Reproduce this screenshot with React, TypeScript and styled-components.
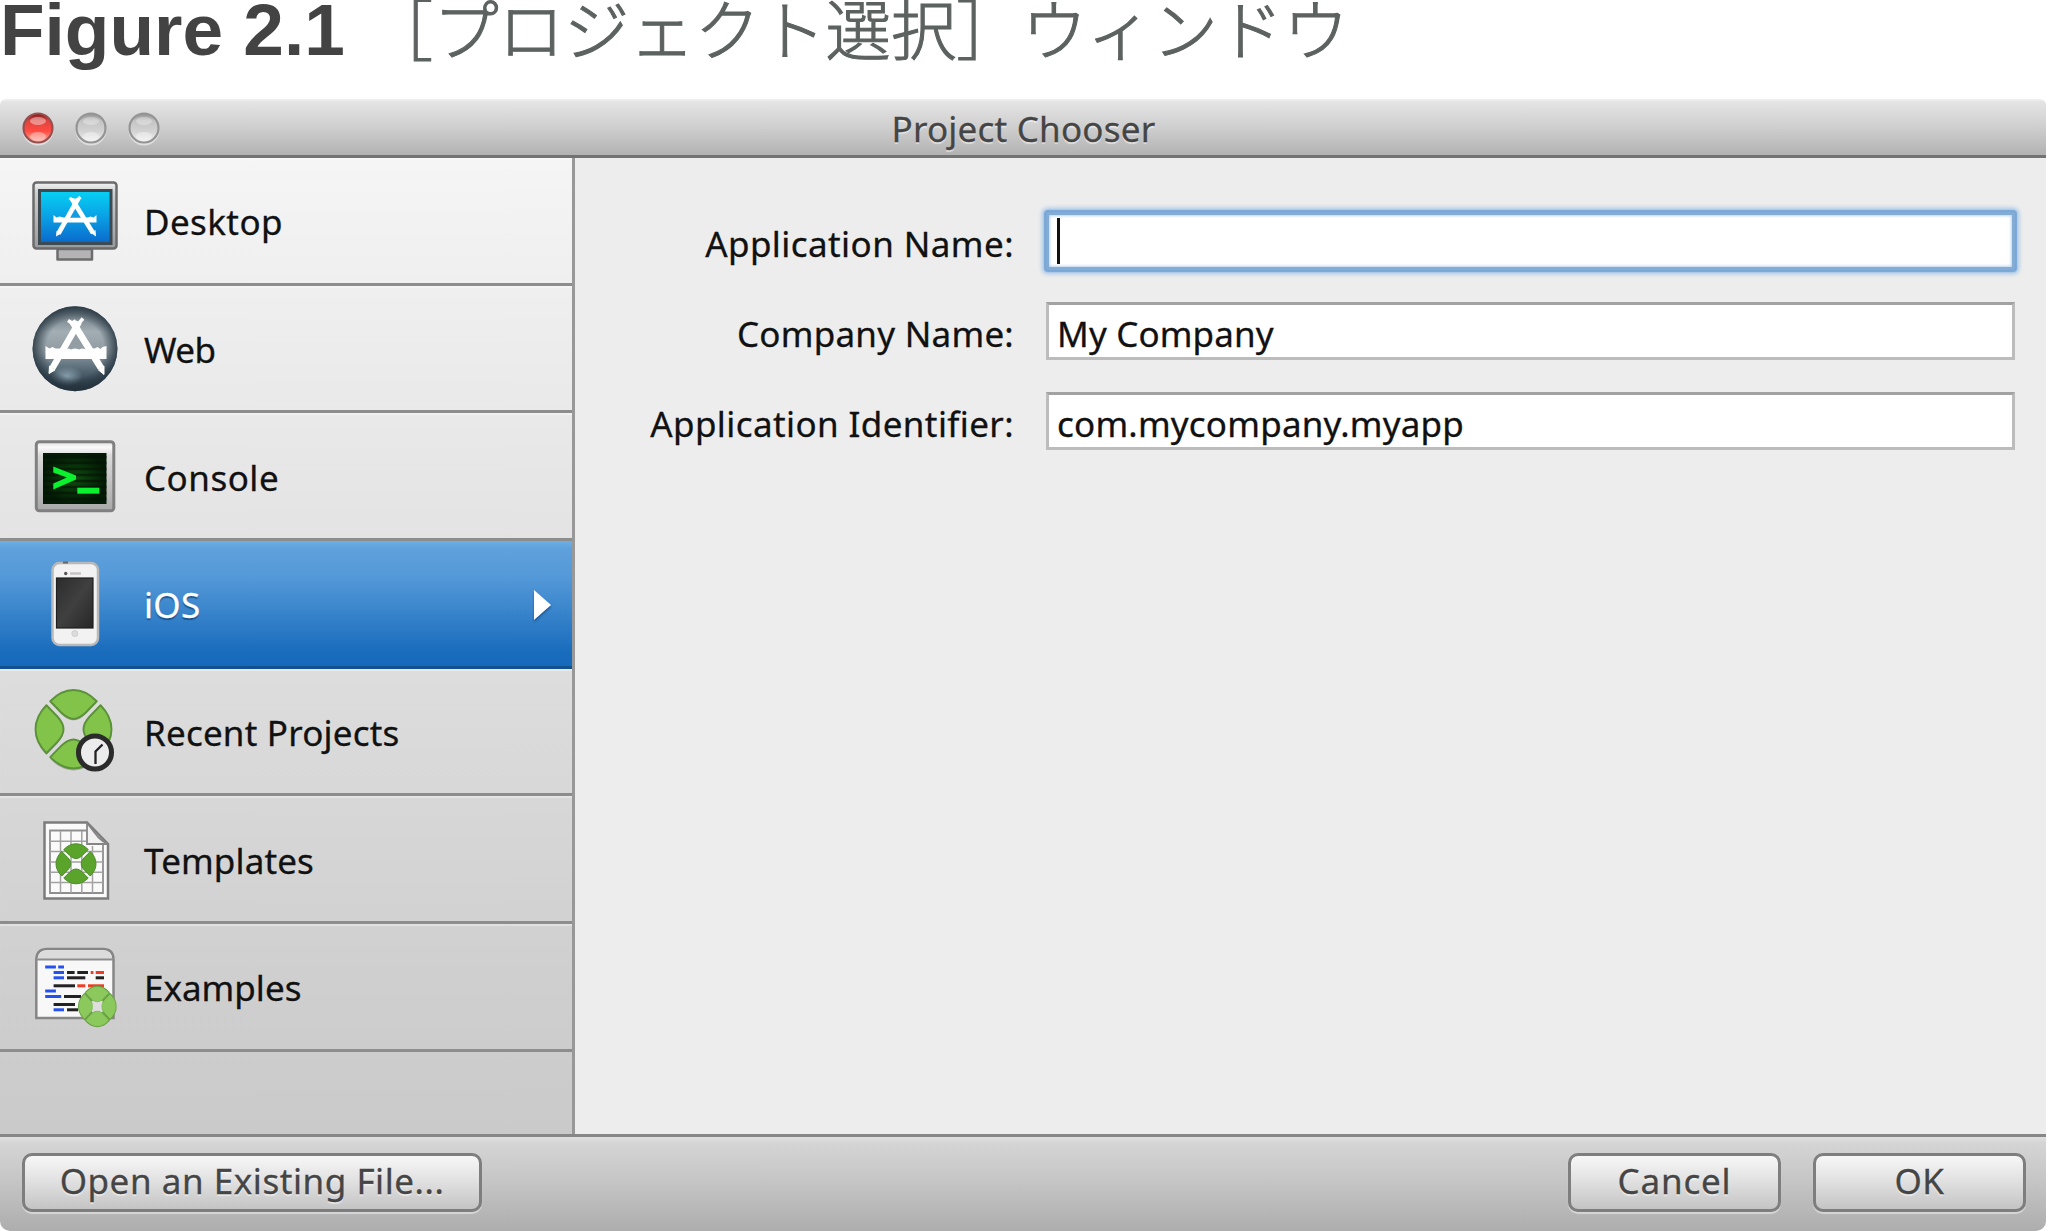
import React from 'react';
import styled, { createGlobalStyle, css } from 'styled-components';

const GlobalStyle = createGlobalStyle`
  *, *::before, *::after { box-sizing: border-box; }
  body { margin: 0; background: #fff; overflow: hidden; }
`;

const Page = styled.div`
  display: flex;
  flex-direction: column;
  width: 2048px;
  height: 1231px;
  overflow: hidden;
  font-family: 'Noto Sans', 'Open Sans', sans-serif;
  font-size: 35px;
  line-height: 48px;
  color: #111;
`;

const Caption = styled.h1`
  flex: none;
  height: 99px;
  margin: 0;
  font: bold 73px/60px 'Liberation Sans', sans-serif;
  color: #434343;
  white-space: nowrap;
`;

const CaptionText = styled.span`
  margin-left: 23px;
  font: 300 65.4px/0 'Noto Sans CJK JP', sans-serif;
  color: #5c6260;
  -webkit-text-stroke: 1.1px #5c6260;
`;

const Window = styled.section`
  flex: 1;
  display: flex;
  flex-direction: column;
  min-height: 0;
  margin-right: 2px;
  border-radius: 6px 6px 10px 10px;
  overflow: hidden;
  -webkit-text-stroke: 0.3px currentColor;
`;

const TitleBar = styled.header`
  flex: none;
  display: grid;
  grid-template-columns: 1fr auto 1fr;
  align-items: center;
  height: 59px;
  padding: 2px 21px 0 22px;
  border-bottom: 3px solid #737373;
  background: linear-gradient(#f2f2f2, #e4e4e4 5%, #cfcfcf 50%, #b2b2b2);
`;

const Lights = styled.div`
  display: flex;
  gap: 21px;
`;

const Title = styled.div<{ $track: number }>`
  padding-top: 2px;
  letter-spacing: ${p => p.$track}px;
  color: #454545;
  text-shadow: 0 2px 1px rgba(255, 255, 255, 0.5);
`;

const Body = styled.div`
  flex: 1;
  display: flex;
  min-height: 0;
`;

const Sidebar = styled.nav`
  flex: none;
  width: 575px;
  border-right: 3px solid #989898;
  background: linear-gradient(#f5f5f5, #e6e6e6 33%, #dcdcdc 55%, #cfcfcf 84%, #cacaca);
`;

const Row = styled.div<{ $selected?: boolean }>`
  display: flex;
  align-items: center;
  height: 127.7px;
  padding: 0 21px 0 26px;
  border-bottom: 3px solid #8d8d8d;
  box-shadow: inset 0 2px 1px rgba(255, 255, 255, 0.35);
  ${p => p.$selected && css`
    color: #fff;
    text-shadow: 0 2px 1px rgba(0, 40, 90, 0.55);
    border-bottom-color: #12518f;
    background: linear-gradient(#6cb0e6, #5fa1dc 6%, #5398d8 30%, #1a6dbd 88%, #176abb);
    box-shadow: none;
  `}
`;

const Icon = styled.svg`
  flex: none;
  width: 96px;
  height: 96px;
  overflow: visible;
`;

const RowLabel = styled.span<{ $track: number }>`
  flex: 1;
  margin-left: 22px;
  padding-top: 4px;
  letter-spacing: ${p => p.$track}px;
`;

const Arrow = styled.svg`
  width: 17px;
  height: 30px;
  margin-top: 3px;
  overflow: visible;
  filter: drop-shadow(0 2px 1px rgba(0, 40, 90, 0.5));
`;

const Form = styled.main`
  flex: 1;
  display: flex;
  flex-direction: column;
  gap: 32px;
  padding: 54px 31px 0 0;
  background: #ededed;
`;

const Field = styled.label`
  display: flex;
  align-items: center;
  gap: 32px;
  height: 58px;
`;

const FieldLabel = styled.span<{ $track: number }>`
  width: 439px;
  padding-top: 6px;
  text-align: right;
  white-space: nowrap;
  letter-spacing: ${p => p.$track}px;
`;

const Input = styled.div<{ $focused?: boolean; $track?: number }>`
  flex: 1;
  display: flex;
  align-items: center;
  height: 58px;
  padding: 6px 0 0 8px;
  border: 3px solid #bcbcbc;
  border-top-color: #a2a2a2;
  background: #fff;
  letter-spacing: ${p => p.$track ?? 0}px;
  ${p => p.$focused && css`
    padding-top: 0;
    border-color: #82abd6;
    border-radius: 2px;
    box-shadow: 0 0 1px 2px #78a7d6, 0 0 4px 4px #a3c5e8, inset 0 0 3px 1px #b9d3ee;
  `}
`;

const Caret = styled.i`
  width: 3px;
  height: 46px;
  background: #111;
`;

const Footer = styled.footer`
  flex: none;
  display: flex;
  gap: 32px;
  height: 97px;
  padding: 16px 20px 0 22px;
  border-top: 3px solid #878787;
  background: linear-gradient(#e0e0e0, #d5d5d5 6%, #c4c4c4 50%, #adadad);
`;

const Spacer = styled.div`
  flex: 1;
`;

const Button = styled.button<{ $width: number; $track: number }>`
  width: ${p => p.$width}px;
  height: 59px;
  padding: 0 0 3px;
  border: 3px solid #7e7e7e;
  border-radius: 10px;
  background: linear-gradient(#f7f7f7, #e2e2e2 45%, #c4c4c4);
  box-shadow: 0 2px 1px rgba(255, 255, 255, 0.45);
  font: inherit;
  letter-spacing: ${p => p.$track}px;
  color: #454545;
  text-shadow: 0 2px 1px rgba(255, 255, 255, 0.5);
`;

const Light = ({ id, red }: { id: string; red?: boolean }) => (
  <svg width="32" height="34" viewBox="0 0 32 34" overflow="visible">
    <defs>
      <linearGradient id={id} x2="0" y2="1">
        <stop offset="0" stopColor={red ? '#7c1616' : '#909090'} />
        <stop offset=".25" stopColor={red ? '#dd4440' : '#c4c4c4'} />
        <stop offset=".6" stopColor={red ? '#ff4a40' : '#d2d2d2'} />
        <stop offset="1" stopColor={red ? '#ffb0a0' : '#f0f0f0'} />
      </linearGradient>
    </defs>
    <circle cx="16" cy="19" r="15.5" fill="#fff" opacity=".5" />
    <circle cx="16" cy="17" r="14.5" fill={`url(#${id})`} stroke={red ? '#965050' : '#949494'} strokeWidth="2.2" />
    <ellipse cx="16" cy="10" rx="8" ry="4" fill="#fff" opacity={red ? 0.4 : 0.3} />
    <ellipse cx="16" cy="25.500" rx="8" ry="4.500" fill="#fff" opacity=".35" />
  </svg>
);

const segment = 'M-24.500 -28.500C-17 -36 -9 -40 0 -40C9 -40 17 -36 24.500 -28.500L13 -17C8 -12.300 4.500 -10.500 0 -10.500C-4.500 -10.500 -8 -12.300 -13 -17Z';

const Ring = ({ x, y, sx, sy, fill, stroke, line = 1.6 }: { x: number; y: number; sx: number; sy: number; fill: string; stroke: string; line?: number }) => (
  <g transform={`translate(${x} ${y}) scale(${sx} ${sy})`}>
    {[0, 90, 180, 270].map(a => (
      <path key={a} d={segment} transform={`rotate(${a})`} fill={fill} stroke={stroke} strokeWidth={line} strokeLinejoin="round" />
    ))}
  </g>
);

const DesktopIcon = () => (
  <Icon viewBox="0 0 96 96">
    <defs>
      <linearGradient id="bezel" x2="0" y2="1"><stop offset="0" stopColor="#f4f4f4" /><stop offset=".15" stopColor="#cfcfcf" /><stop offset="1" stopColor="#9a9a9a" /></linearGradient>
      <linearGradient id="screen" x2="0" y2="1"><stop offset="0" stopColor="#06d2f4" /><stop offset=".5" stopColor="#0aa0e4" /><stop offset="1" stopColor="#0a68cc" /></linearGradient>
    </defs>
    <path d="M31.500 77H66V87.500H31.500Z" fill="#b4b4b4" stroke="#6c6c6c" strokeWidth="2.500" strokeLinejoin="round" />
    <rect x="7.500" y="10.500" width="83" height="66" rx="3" fill="url(#bezel)" stroke="#6b6b6b" strokeWidth="2.500" />
    <rect x="13.500" y="18.500" width="71.500" height="53" fill="url(#screen)" stroke="#3c4a54" strokeWidth="3" />
    <g fill="none" stroke="#fff">
      <path d="M27.500 43l3 2.500 3-1 4 1h24l3-1 3 1 3-2.500v7.500h-43Z" fill="#fff" stroke="none" />
      <path d="M43 45.500L49 35L55 45.500Z" fill="#149be0" stroke="none" />
      <path d="M52 27L32.500 61.500" strokeWidth="4.600" /><path d="M46 27L67 61" strokeWidth="4.600" />
      <path d="M30.500 59l4.500 2.500-5 3ZM69.500 58l-4.500 3 5 3.500Z" fill="#fff" stroke="none" />
      <path d="M43.500 26L51 31M54.500 25l-6 6" strokeWidth="3.200" />
    </g>
  </Icon>
);

const WebIcon = () => (
  <Icon viewBox="0 0 96 96">
    <defs>
      <linearGradient id="globe" x2="0" y2="1"><stop offset="0" stopColor="#5a6872" /><stop offset=".3" stopColor="#a3aeb4" /><stop offset=".55" stopColor="#8c989f" /><stop offset=".72" stopColor="#5c6f7b" /><stop offset="1" stopColor="#1e2c37" /></linearGradient>
      <radialGradient id="rim"><stop offset=".68" stopColor="#24333e" stopOpacity="0" /><stop offset="1" stopColor="#24333e" stopOpacity=".85" /></radialGradient>
      <radialGradient id="glow"><stop offset="0" stopColor="#9cb4c2" stopOpacity=".75" /><stop offset="1" stopColor="#9cb4c2" stopOpacity="0" /></radialGradient>
    </defs>
    <circle cx="49" cy="48.700" r="42.500" fill="url(#globe)" />
    <ellipse cx="41" cy="76" rx="16" ry="10" fill="url(#glow)" />
    <circle cx="49" cy="48.700" r="42.500" fill="url(#rim)" />
    <path d="M19.500 46l4 2.500 3-1.500 3 1.500h39l3-1.500 3 2 2-2 4-1v13h-61Z" fill="#fff" />
    <path d="M39 49.500l9.500-17L60 49.500l-4-1.500-3 1.500-4-1.500-4 1.500-3-1.500Z" fill="#929da4" />
    <g stroke="#fff" fill="#fff">
      <path d="M53 22L26.500 68" strokeWidth="6.500" /><path d="M46 21L75 68" strokeWidth="6.800" />
      <path d="M23.500 66l5.500 4-6 3.500ZM78 66l-5.500 4 5.500 4.500Z" strokeWidth="1" />
      <path d="M42 20.500l11 6.500M57 18.500l-7 8" strokeWidth="3.500" />
    </g>
  </Icon>
);

const ConsoleIcon = () => (
  <Icon viewBox="0 0 96 96">
    <defs>
      <linearGradient id="case" x2="0" y2="1"><stop offset="0" stopColor="#dedede" /><stop offset=".08" stopColor="#fafafa" /><stop offset=".2" stopColor="#dadada" /><stop offset="1" stopColor="#a8a8a8" /></linearGradient>
      <radialGradient id="crt"><stop offset="0" stopColor="#0d4d0f" /><stop offset="1" stopColor="#031a04" /></radialGradient>
    </defs>
    <rect x="10.300" y="13.700" width="77.500" height="69" rx="3" fill="url(#case)" stroke="#808080" strokeWidth="3" />
    <rect x="17" y="25" width="63.500" height="51" fill="url(#crt)" />
    {[29, 35, 41, 47, 53, 59, 65, 71].map(y => <path key={y} d={`M17 ${y}H80.500`} stroke="#061206" strokeWidth="2.500" opacity=".6" />)}
    <path d="M27.300 38.500L50 47.500V51.500L27.300 61.500V55.500L41 49.500L27.300 44.500Z" fill="#0bf02f" />
    <rect x="51.300" y="59.700" width="22" height="6" fill="#0bf02f" />
  </Icon>
);

const PhoneIcon = () => (
  <Icon viewBox="0 0 96 96">
    <defs><linearGradient id="glass" x2="1" y2="1"><stop offset="0" stopColor="#2c2c2c" /><stop offset=".5" stopColor="#404040" /><stop offset="1" stopColor="#262626" /></linearGradient></defs>
    <rect x="26.500" y="8" width="45.500" height="82" rx="7" fill="#f2f2f2" stroke="#b9b9b9" strokeWidth="2.500" />
    <path d="M37 7.500h5" stroke="#666" strokeWidth="2" />
    <rect x="30.500" y="23" width="36.500" height="50" fill="url(#glass)" stroke="#1f1f1f" strokeWidth="1.200" />
    <circle cx="39.700" cy="18.500" r="1.700" fill="#555" />
    <path d="M44 18.500h11" stroke="#c4c4c4" strokeWidth="2.500" />
    <circle cx="48.800" cy="78.500" r="3" fill="#dcdcdc" stroke="#cfcfcf" />
  </Icon>
);

const RecentIcon = () => (
  <Icon viewBox="0 0 96 96">
    <Ring x={47.5} y={47.800} sx={0.95} sy={0.99} fill="rgba(0,0,0,.2)" stroke="none" />
    <Ring x={47.5} y={46.2} sx={0.95} sy={0.98} fill="#82c34a" stroke="#5b9138" line={2} />
    <circle cx="69" cy="69.500" r="16.500" fill="#ececec" stroke="#2b2b2b" strokeWidth="5" />
    <path d="M69.500 81V68.500L76.500 61.500" fill="none" stroke="#222" strokeWidth="2.300" />
  </Icon>
);

const TemplatesIcon = () => (
  <Icon viewBox="0 0 96 96">
    <path d="M18.500 11.500H61L82 33V87.500H18.500Z" fill="#fafafa" stroke="#7c7c7c" strokeWidth="2.500" />
    <path d="M60 19.500H24V82H77V34" fill="none" stroke="#8e8e8e" strokeWidth="1.800" />
    <path d="M24 30.300H60M24 40.600H77M24 50.900H77M24 61.200H77M24 71.500H77M34.500 20V82M45 20V82M55.800 20V82M66.500 35V82" stroke="#a2a2a2" strokeWidth="1.500" />
    <path d="M61 12V33H82Q77 31 72 26L61 12" fill="#f1f1f1" stroke="#858585" strokeWidth="1.800" />
    <Ring x={50} y={52.8} sx={0.5} sy={0.5} fill="#5ba42c" stroke="#4c8c2a" line={2} />
  </Icon>
);

const codeRuns: [number, number, number, string][] = [
  [19.2, 29, 10.7, '#2450f0'], [32.2, 29, 5.8, '#2450f0'],
  [27.6, 34.5, 10.4, '#2450f0'], [41, 34.5, 7.6, '#222'], [51.3, 34.5, 10.7, '#222'], [64.7, 34.5, 2.7, '#ee3d22'], [69.7, 34.5, 8.3, '#ee3d22'],
  [27.6, 39.8, 10.4, '#2450f0'], [41, 39.8, 18.3, '#222'], [69.7, 39.8, 8.3, '#222'],
  [27.6, 47.8, 21.4, '#222'], [51.3, 47.8, 8, '#ee3d22'], [62, 47.8, 16, '#ee3d22'],
  [19.2, 53, 10.7, '#2450f0'],
  [19.2, 58.5, 16, '#2450f0'], [38, 58.5, 17, '#222'],
  [27.6, 66.5, 21.4, '#222'],
  [27.6, 71.8, 10.4, '#2450f0'], [41, 71.8, 11, '#222'],
];

const ExamplesIcon = () => (
  <Icon viewBox="0 0 96 96">
    <path d="M10.300 80V21Q11 11 21 11H77Q87 11 87.500 21V80Z" fill="#f8f8f8" stroke="#868686" strokeWidth="2.500" />
    <path d="M11.500 21Q12.500 12.300 21 12.300H77Q85.500 12.300 86.300 21Z" fill="#dcdcdc" />
    <path d="M10.300 21.500H87.500" stroke="#8d8d8d" strokeWidth="2" />
    {codeRuns.map(([x, y, w, c], i) => <rect key={i} x={x} y={y - 1.5} width={w} height="3" fill={c} />)}
    <Ring x={71.3} y={68.5} sx={0.44} sy={0.47} fill="#68a143" stroke="#68a143" line={8} />
    <Ring x={71.3} y={68.5} sx={0.45} sy={0.48} fill="#8cc95c" stroke="#8cc95c" line={2} />
    <path d="M66.500 63.500Q71.300 66.500 76 63.500Q73.500 68.500 76 73.500Q71.300 70.500 66.500 73.500Q69 68.500 66.500 63.500Z" fill="#dedede" stroke="#dedede" strokeWidth="1.500" strokeLinejoin="round" />
  </Icon>
);

const rows = [
  { label: 'Desktop', track: 0.4, icon: DesktopIcon },
  { label: 'Web', track: -0.6, icon: WebIcon },
  { label: 'Console', track: 0.5, icon: ConsoleIcon },
  { label: 'iOS', track: 0.3, icon: PhoneIcon, selected: true },
  { label: 'Recent Projects', track: 0.2, icon: RecentIcon },
  { label: 'Templates', track: 0.12, icon: TemplatesIcon },
  { label: 'Examples', track: 0, icon: ExamplesIcon },
];

export default function App() {
  return (
    <Page>
      <GlobalStyle />
      <Caption>Figure 2.1<CaptionText>［プロジェクト選択］ウィンドウ</CaptionText></Caption>
      <Window>
        <TitleBar>
          <Lights>
            <Light id="close" red />
            <Light id="minimize" />
            <Light id="zoom" />
          </Lights>
          <Title $track={0.22}>Project Chooser</Title>
        </TitleBar>
        <Body>
          <Sidebar>
            {rows.map(({ label, track, icon: RowIcon, selected }) => (
              <Row key={label} $selected={selected}>
                <RowIcon />
                <RowLabel $track={track}>{label}</RowLabel>
                {selected && <Arrow viewBox="0 0 17 30"><path d="M0 0L17 15L0 30Z" fill="#fff" /></Arrow>}
              </Row>
            ))}
          </Sidebar>
          <Form>
            <Field>
              <FieldLabel $track={0.43}>Application Name:</FieldLabel>
              <Input $focused><Caret /></Input>
            </Field>
            <Field>
              <FieldLabel $track={0.25}>Company Name:</FieldLabel>
              <Input $track={0.15}>My Company</Input>
            </Field>
            <Field>
              <FieldLabel $track={0.4}>Application Identifier:</FieldLabel>
              <Input $track={0.2}>com.mycompany.myapp</Input>
            </Field>
          </Form>
        </Body>
        <Footer>
          <Button $width={460} $track={0.55}>Open an Existing File...</Button>
          <Spacer />
          <Button $width={213} $track={0.8}>Cancel</Button>
          <Button $width={213} $track={0.4}>OK</Button>
        </Footer>
      </Window>
    </Page>
  );
}
